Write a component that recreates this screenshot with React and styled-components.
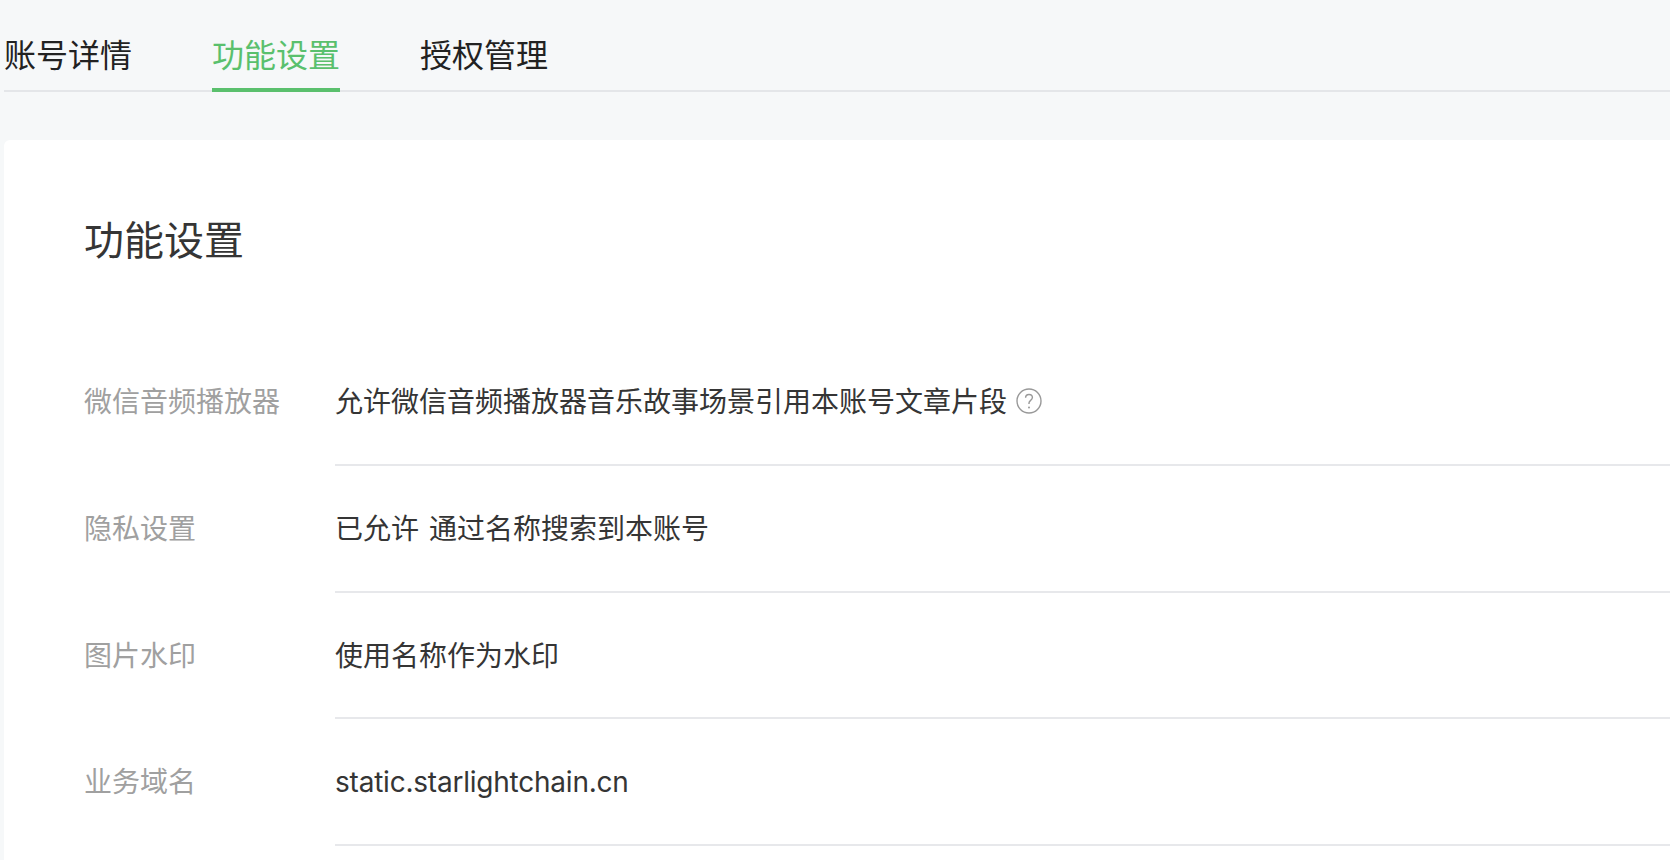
import React from 'react';
import styled, { createGlobalStyle } from 'styled-components';

const GlobalStyle = createGlobalStyle`
  html, body {
    margin: 0;
    height: 100%;
    overflow: hidden;
    background: #f6f8f9;
  }
  body {
    font-family: Inter, "Noto Sans CJK SC", sans-serif;
  }
`;

const Page = styled.div`
  height: 860px;
  padding-left: 4px;
  overflow: hidden;
`;

const TabBar = styled.nav`
  display: flex;
  align-items: flex-end;
  gap: 80px;
  height: 92px;
  box-sizing: border-box;
  border-bottom: 2px solid #e4e6e9;
`;

const Tab = styled.a`
  height: 62px;
  margin-bottom: -2px;
  box-sizing: border-box;
  font-size: 32px;
  line-height: 52px;
  color: ${(p) => (p.$active ? '#5ac06d' : '#222')};
  border-bottom: 4px solid ${(p) => (p.$active ? '#5ac06d' : 'transparent')};
`;

const Card = styled.section`
  margin-top: 48px;
  height: 720px;
  padding: 71px 0 0 80px;
  background: #fff;
  border-radius: 6px 0 0 0;
`;

const Title = styled.h2`
  margin: 0 0 68.33px;
  font-size: 40px;
  font-weight: 400;
  line-height: 60px;
  color: #353535;
`;

const Row = styled.div`
  display: grid;
  grid-template-columns: 251px 1fr;
  height: 126.67px;
`;

const Label = styled.div`
  padding-top: 41px;
  font-size: 28px;
  line-height: 44px;
  color: #a0a0a0;
`;

const Value = styled.div`
  display: flex;
  align-items: flex-start;
  box-sizing: border-box;
  padding-top: 41px;
  font-size: 28px;
  line-height: 44px;
  word-spacing: 2px;
  letter-spacing: ${(p) => (p.$latin ? '-0.22px' : '0')};
  color: #353535;
  border-bottom: 2px solid #e7e8eb;
`;

const HelpIcon = styled.svg`
  flex: none;
  width: 26px;
  height: 26px;
  margin: 8px 0 0 9px;
`;

const Help = () => (
  <HelpIcon viewBox="0 0 26 26" fill="none" stroke="#999">
    <circle cx="13" cy="13" r="12" strokeWidth="1.4" />
    <path d="M9.6 9.8c0-2 1.5-3.3 3.4-3.3s3.4 1.3 3.4 3.1c0 1.5-.9 2.2-2 3-.9.7-1.4 1.3-1.4 2.5v1" strokeWidth="1.4" />
    <circle cx="13" cy="19.6" r="1" fill="#999" stroke="none" />
  </HelpIcon>
);

const rows = [
  { label: '微信音频播放器', value: '允许微信音频播放器音乐故事场景引用本账号文章片段', help: true },
  { label: '隐私设置', value: '已允许 通过名称搜索到本账号' },
  { label: '图片水印', value: '使用名称作为水印' },
  { label: '业务域名', value: 'static.starlightchain.cn', latin: true },
];

export default function App() {
  return (
    <Page>
      <GlobalStyle />
      <TabBar>
        <Tab>账号详情</Tab>
        <Tab $active>功能设置</Tab>
        <Tab>授权管理</Tab>
      </TabBar>
      <Card>
        <Title>功能设置</Title>
        {rows.map((r) => (
          <Row key={r.label}>
            <Label>{r.label}</Label>
            <Value $latin={r.latin}>
              {r.value}
              {r.help && <Help />}
            </Value>
          </Row>
        ))}
      </Card>
    </Page>
  );
}
